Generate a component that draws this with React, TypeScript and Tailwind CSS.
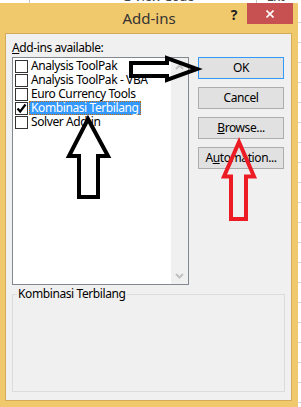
import type { ReactNode } from 'react'

const addins = [
  { name: 'Analysis ToolPak', checked: false, selected: false },
  { name: 'Analysis ToolPak - VBA', checked: false, selected: false },
  { name: 'Euro Currency Tools', checked: false, selected: false },
  { name: 'Kombinasi Terbilang', checked: true, selected: true },
  { name: 'Solver Add-in', checked: false, selected: false },
]

function Chevron({ up }: { up?: boolean }) {
  return (
    <svg width="9" height="6" viewBox="0 0 9 6">
      <path
        d={up ? 'M1 5 L4.5 1.5 L8 5' : 'M1 1 L4.5 4.5 L8 1'}
        fill="none"
        stroke="#c2c2c2"
        strokeWidth="2"
      />
    </svg>
  )
}

function DlgButton({ children, isDefault }: { children: ReactNode; isDefault?: boolean }) {
  return (
    <button
      className={`h-[22px] w-[86px] border bg-[#e1e1e1] text-[12px] leading-[16px] tracking-[-0.4px] text-black ${
        isDefault ? 'border-[#3399ff]' : 'border-[#adadad]'
      }`}
    >
      {children}
    </button>
  )
}

export default function App() {
  return (
    <div className="relative h-[407px] w-[301px] overflow-hidden bg-white font-['Noto_Sans',sans-serif] text-[12px] leading-[16px] tracking-[-0.4px] text-black">
      {/* bits of the excel window behind the dialog */}
      <div className="flex h-[3px] overflow-hidden text-[13px] leading-[16px] text-[#444]">
        <div className="ml-[29px] h-full w-px bg-[#c8c8c8]" />
        <span className="ml-[92px] -mt-[12px]">G View Code</span>
        <div className="ml-[62px] h-full w-px bg-[#c8c8c8]" />
        <span className="ml-[10px] -mt-[12px]">Ext</span>
      </div>

      <div className="flex">
        <div className="flex h-[404px] w-[298px] flex-col bg-[#f1c96d]">
          {/* title bar */}
          <div className="grid h-[30px] grid-cols-[1fr_auto_1fr]">
            <div />
            <div className="self-center pb-[1px] text-[15px] leading-[20px] tracking-normal text-[#333]">Add-ins</div>
            <div className="mr-[5px] flex items-start justify-end">
              <div className="w-[26px] pt-[4px] text-center text-[14px] font-bold leading-[16px] text-[#222]">?</div>
              <div className="flex h-[21px] w-[46px] items-center justify-center bg-[#c75050]">
                <svg width="8" height="8" viewBox="0 0 8 8">
                  <path d="M0.5 0.5 L7.5 7.5 M7.5 0.5 L0.5 7.5" stroke="white" strokeWidth="1.6" />
                </svg>
              </div>
            </div>
          </div>

          {/* client area */}
          <div className="ml-[5px] h-[368px] w-[287px] border border-[#d3ab5a] bg-[#f0f0f0] px-[6px] pt-[6px]">
            <div>
              <u>A</u>dd-ins available:
            </div>

            <div className="mt-[1px] flex gap-[9px]">
              <div className="flex h-[228px] w-[177px] border border-[#828790] bg-white">
                <div className="flex-1 pl-[2px] pt-[1px]">
                  {addins.map((item) => (
                    <div key={item.name} className="flex h-[14px] items-center">
                      <div className="flex h-[13px] w-[13px] items-center justify-center border border-[#333] bg-white">
                        {item.checked && (
                          <svg width="11" height="11" viewBox="0 0 11 11">
                            <path d="M1.5 5.5 L4.2 8.5 L9.5 1.5" fill="none" stroke="black" strokeWidth="2.2" />
                          </svg>
                        )}
                      </div>
                      <span
                        className={`ml-[1px] flex h-full items-center whitespace-nowrap border px-[1px] ${
                          item.selected
                            ? 'border-dotted border-[#cc6600] bg-[#3399ff] text-white'
                            : 'border-transparent'
                        }`}
                      >
                        {item.name}
                      </span>
                    </div>
                  ))}
                </div>
                <div className="flex w-[17px] flex-col justify-between bg-[#f0f0f0]">
                  <div className="flex h-[17px] items-center justify-center">
                    <Chevron up />
                  </div>
                  <div className="flex h-[17px] items-center justify-center">
                    <Chevron />
                  </div>
                </div>
              </div>

              <div className="flex flex-col gap-[8px]">
                <DlgButton isDefault>OK</DlgButton>
                <DlgButton>Cancel</DlgButton>
                <DlgButton>
                  <u>B</u>rowse...
                </DlgButton>
                <DlgButton>
                  A<u>u</u>tomation...
                </DlgButton>
              </div>
            </div>

            <div className="mt-[9px] h-[98px] w-[273px] border border-[#dcdcdc]">
              <span className="ml-[4px] -mt-[8px] block w-fit bg-[#f0f0f0] px-[1px] leading-[14px]">
                Kombinasi Terbilang
              </span>
            </div>
          </div>
        </div>

        <div className="flex flex-1 flex-col">
          {Array.from({ length: 21 }).map((_, i) => (
            <div key={i} className="h-[20px] border-b border-[#d4d4d4]" />
          ))}
        </div>
      </div>

      {/* arrows drawn over the screenshot */}
      <svg className="pointer-events-none absolute inset-0" width="301" height="407" viewBox="0 0 301 407">
        <polygon
          points="131,63 167,63 167,58 197,69 167,80 167,76 131,76"
          fill="none"
          stroke="black"
          strokeWidth="4"
        />
        <polygon
          points="88,119 108,156 98,156 98,197 79,197 79,156 69,156"
          fill="none"
          stroke="black"
          strokeWidth="4"
        />
        <polygon
          points="239,142 254,176.5 246,176.5 246,219 231,219 231,176.5 224,176.5"
          fill="none"
          stroke="#ed1c24"
          strokeWidth="4"
        />
      </svg>
    </div>
  )
}
